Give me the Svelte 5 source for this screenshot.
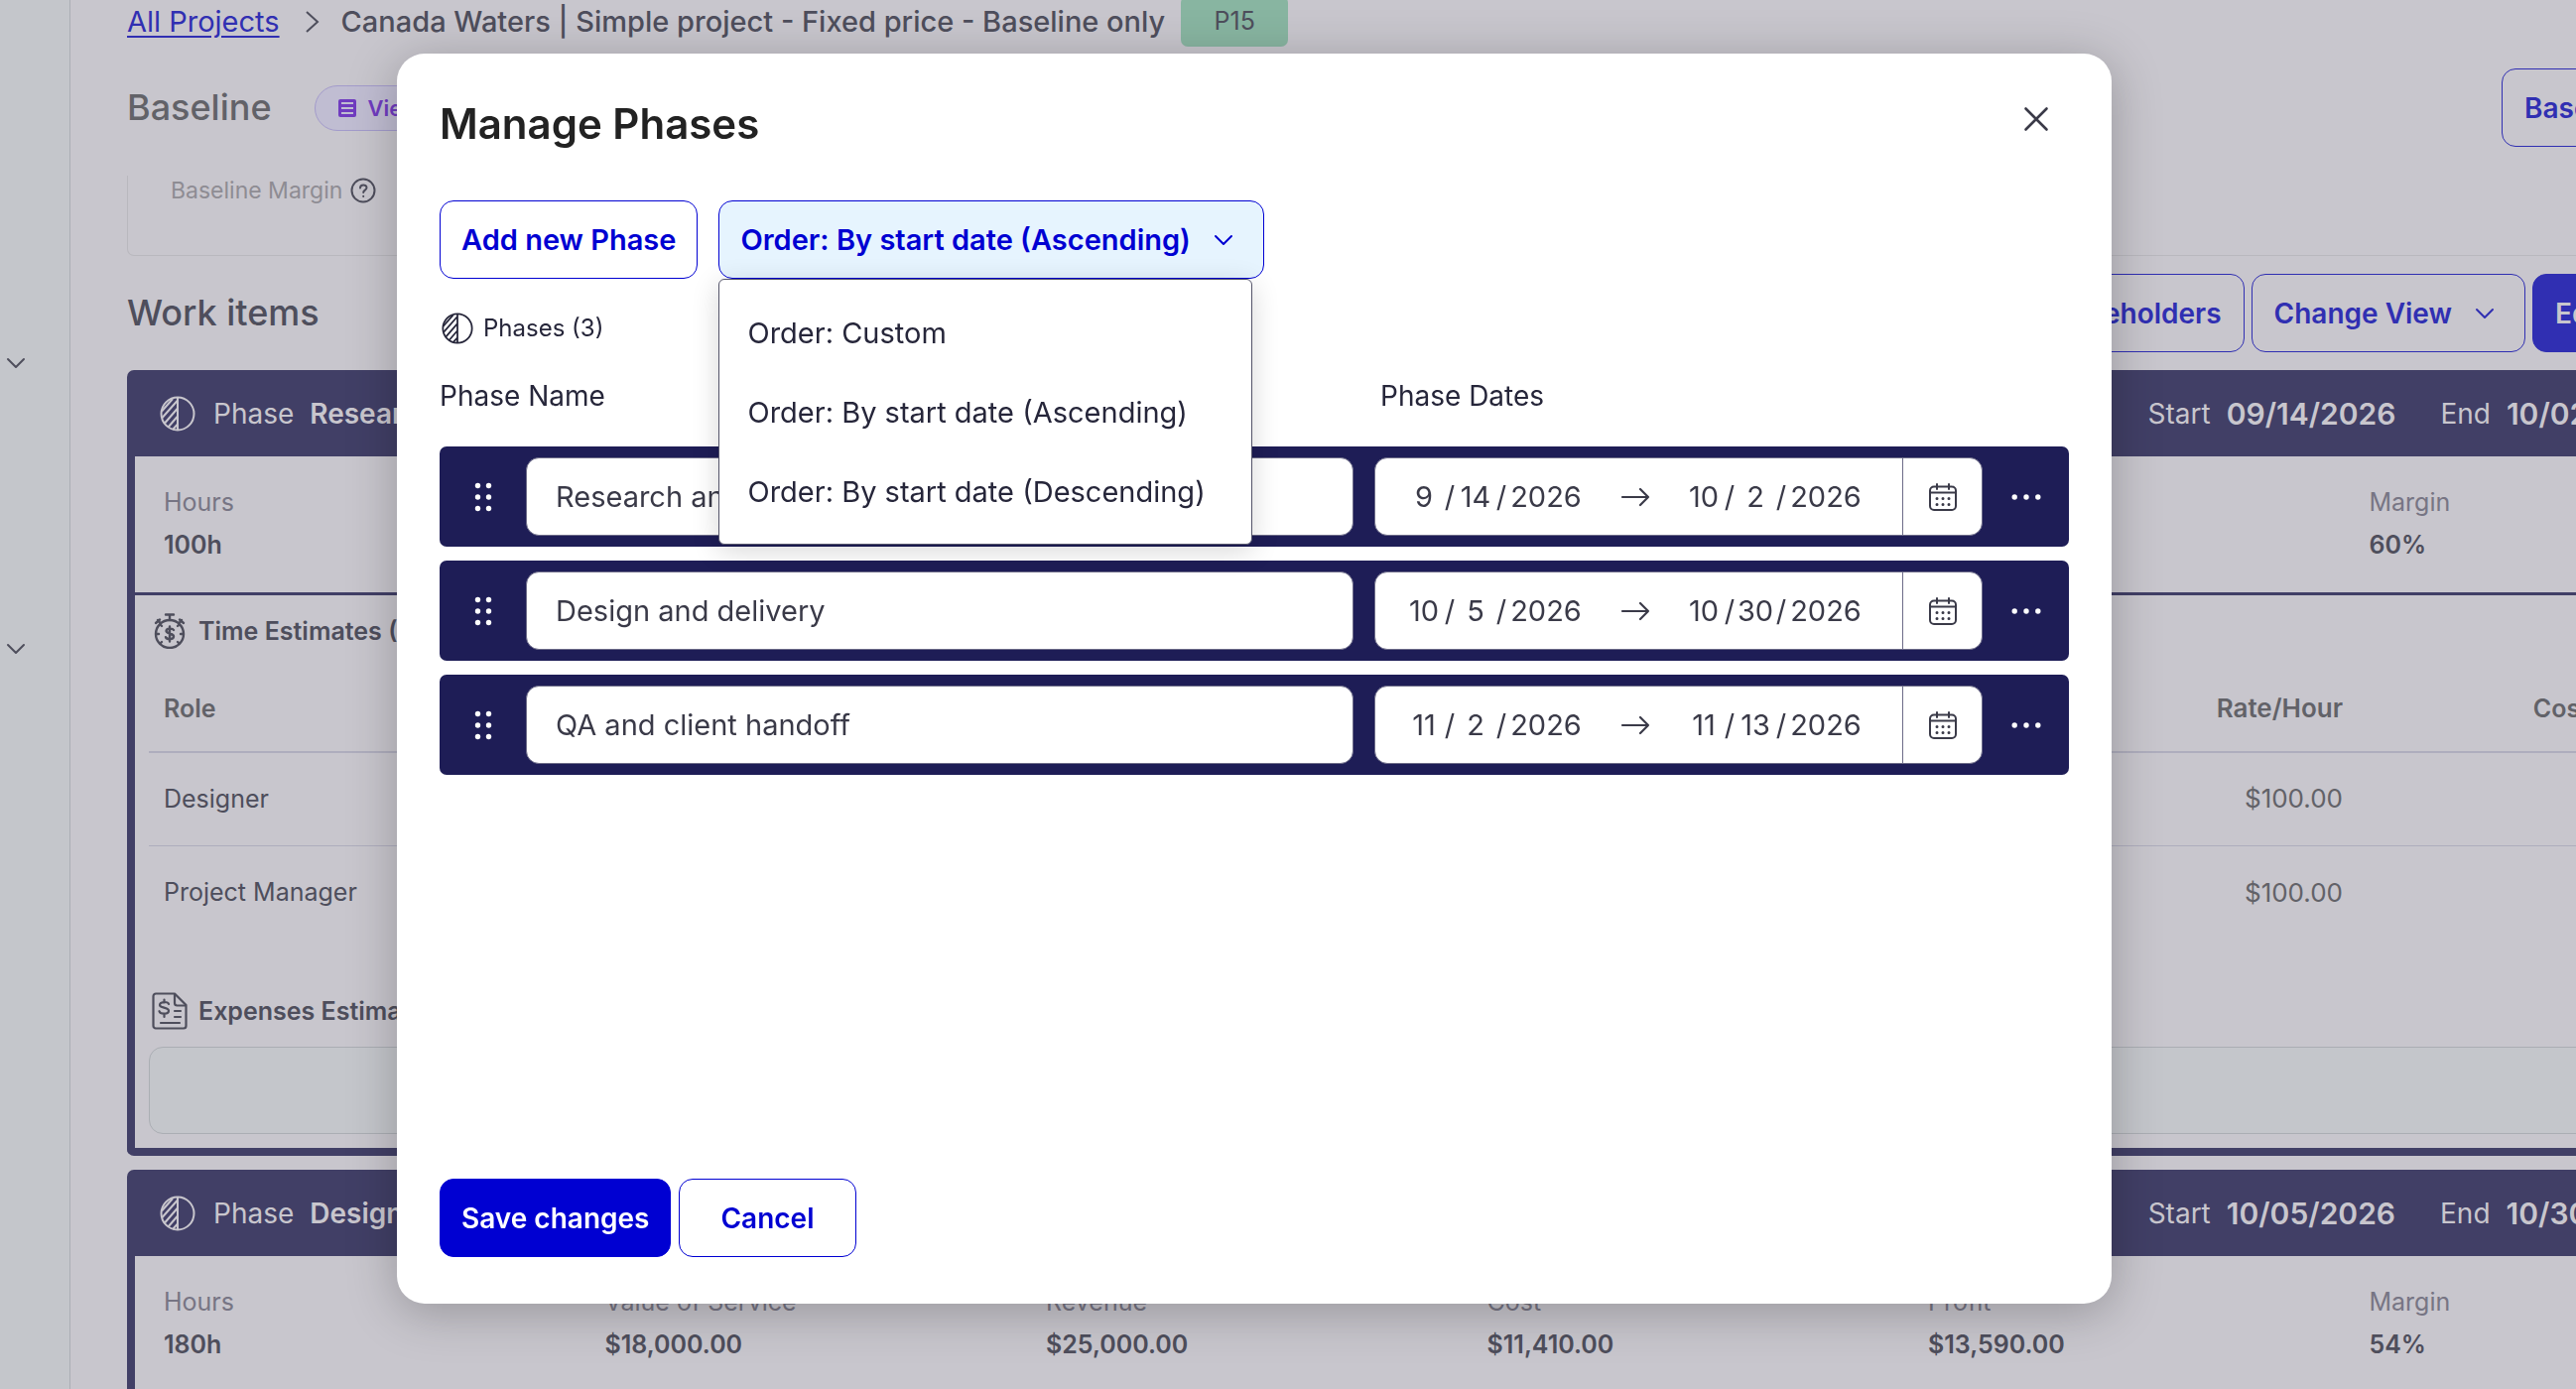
<script lang="ts">
    let menuOpen = $state(true);
    let modalOpen = $state(true);
    let order = $state("By start date (Ascending)");

    const orders = ["Custom", "By start date (Ascending)", "By start date (Descending)"];

    let phases = $state([
        { name: "Research and discovery", start: ["9", "14", "2026"], end: ["10", "2", "2026"] },
        { name: "Design and delivery", start: ["10", "5", "2026"], end: ["10", "30", "2026"] },
        { name: "QA and client handoff", start: ["11", "2", "2026"], end: ["11", "13", "2026"] },
    ]);

    const parts = ["month", "day", "year"];

    const cards = [
        {
            name: "Research and discovery",
            start: "09/14/2026",
            end: "10/02/2026",
            metrics: [
                ["Hours", "100h"],
                ["Value of Service", "$10,000.00"],
                ["Revenue", "$15,000.00"],
                ["Cost", "$6,000.00"],
                ["Profit", "$9,000.00"],
                ["Margin", "60%"],
            ],
            roles: [
                ["Designer", "$100.00"],
                ["Project Manager", "$100.00"],
            ],
        },
        {
            name: "Design and delivery",
            start: "10/05/2026",
            end: "10/30/2026",
            metrics: [
                ["Hours", "180h"],
                ["Value of Service", "$18,000.00"],
                ["Revenue", "$25,000.00"],
                ["Cost", "$11,410.00"],
                ["Profit", "$13,590.00"],
                ["Margin", "54%"],
            ],
            roles: [],
        },
    ];

    function pick(option) {
        order = option;
        menuOpen = false;
    }
</script>

{#snippet phaseIcon(size)}
    <svg width={size} height={size} viewBox="0 0 36 36" fill="none" stroke="currentColor" stroke-width="2" aria-hidden="true">
        <circle cx="18" cy="18" r="16.5" />
        <path d="M18 1.500V34.500M2 15.500L13 3M2.500 22L18 4.500M5 27.500L18 12.500M8.500 31.500L18 20.500M13 34L18 28.500" />
    </svg>
{/snippet}

{#snippet chevron()}
    <svg class="chevron" width="20" height="12" viewBox="0 0 20 12" fill="none" stroke="currentColor" stroke-width="2" stroke-linecap="round" stroke-linejoin="round" aria-hidden="true">
        <path d="M2 2l8 8 8-8" />
    </svg>
{/snippet}

{#snippet dateParts(phase, key)}
    <div class="date">
        {#each parts as part, i}
            {#if i > 0}<span class="slash">/</span>{/if}
            <input class={part} aria-label="{phase.name} {key} {part}" bind:value={phase[key][i]} />
        {/each}
    </div>
{/snippet}

<div class="page">
    <aside>
        <button aria-label="Expand section">{@render chevron()}</button>
        <button aria-label="Expand section">{@render chevron()}</button>
    </aside>

    <main>
        <nav>
            <a href="#projects">All Projects</a>
            <svg width="14" height="24" viewBox="0 0 14 24" fill="none" stroke="currentColor" stroke-width="2" aria-hidden="true">
                <path d="M1 2l11 10L1 22" />
            </svg>
            <span class="project">Canada Waters | Simple project - Fixed price - Baseline only</span>
            <span class="code">P15</span>
        </nav>

        <header>
            <h2 class="muted">Baseline</h2>
            <button class="pill">
                <svg width="18" height="18" viewBox="0 0 18 18" aria-hidden="true">
                    <rect width="18" height="18" rx="2" fill="#703cc0" />
                    <path d="M3 4h12M3 9h12M3 14h12" stroke="#c0bdd2" stroke-width="2" />
                </svg>
                View details
            </button>
            <button class="btn last">Baseline</button>
        </header>

        <section class="margin-box">
            Baseline Margin
            <svg width="26" height="26" viewBox="0 0 26 26" fill="none" stroke="#4e4e5c" stroke-width="2" stroke-linecap="round" aria-hidden="true">
                <circle cx="13" cy="13" r="11.500" />
                <path d="M10 10.500c0-4 6.500-4 6.500-.3 0 2.300-3.300 2.500-3.300 4.800M13.200 18.800v.2" />
            </svg>
        </section>

        <div class="toolbar">
            <h2>Work items</h2>
            <button class="btn">Stakeholders</button>
            <button class="btn with-chevron">Change View {@render chevron()}</button>
            <button class="btn primary last">Edit Baseline</button>
        </div>

        {#each cards as card}
            <article>
                <div class="card-head">
                    {@render phaseIcon(36)}
                    <span>Phase</span>
                    <b>{card.name}</b>
                    <span class="start">Start</span>
                    <time>{card.start}</time>
                    <span class="end">End</span>
                    <time>{card.end}</time>
                </div>
                <dl>
                    {#each card.metrics as [label, value]}
                        <div>
                            <dt>{label}</dt>
                            <dd>{value}</dd>
                        </div>
                    {/each}
                </dl>
                {#if card.roles.length}
                    <div class="estimates">
                        <h3>
                            <svg width="32" height="36" viewBox="0 0 32 36" fill="none" stroke="currentColor" stroke-width="2.400" stroke-linecap="round" aria-hidden="true">
                                <circle cx="16" cy="21" r="14" />
                                <path d="M12 1.500h8M16 2v5M2 10l4-3.500M30 10l-4-3.500M4 7l2.500 3M28 7l-2.500 3M3 21h2M27 21h2M7 30l1-1M25 30l-1-1M7 12l1 1M25 12l-1 1" />
                                <path d="M20 17c-1-2-7.500-2-7.500 1s7.500 2 7.500 5.500-7 3.200-8 .7M16 13.500v15" />
                            </svg>
                            Time Estimates (2)
                        </h3>
                        <table>
                            <thead>
                                <tr><th>Role</th><th class="rate">Rate/Hour</th><th class="cost">Cost</th><th class="actions"></th></tr>
                            </thead>
                            <tbody>
                                {#each card.roles as [role, rate]}
                                    <tr><td>{role}</td><td class="rate">{rate}</td><td></td><td></td></tr>
                                {/each}
                            </tbody>
                        </table>
                        <h3 class="expenses">
                            <svg width="36" height="38" viewBox="0 0 36 38" fill="none" stroke="currentColor" stroke-width="2.200" stroke-linecap="round" stroke-linejoin="round" aria-hidden="true">
                                <path d="M4 1.500h19L34.500 13v21a2.500 2.500 0 0 1-2.500 2.500H4A2.500 2.500 0 0 1 1.500 34V4A2.500 2.500 0 0 1 4 1.500z" />
                                <path d="M23 2v9a2.500 2.500 0 0 0 2.500 2.500H34M23 19h6M23 25h6M9 31h19" />
                                <path d="M17 12c-1-3-9-2.500-9 .9s9 2 9 5.800-8.500 4-9.500.5M12.500 7.500v3M12.500 22v3" />
                            </svg>
                            Expenses Estimates
                        </h3>
                        <div class="empty"></div>
                    </div>
                {/if}
            </article>
        {/each}
    </main>
</div>

{#if modalOpen}
    <div class="overlay">
        <div class="modal" role="dialog" aria-labelledby="modal-title">
            <div class="title">
                <h1 id="modal-title">Manage Phases</h1>
                <button aria-label="Close" onclick={() => (modalOpen = false)}>
                    <svg width="26" height="26" viewBox="0 0 26 26" fill="none" stroke="#3a3a48" stroke-width="2.600" stroke-linecap="round" aria-hidden="true">
                        <path d="M2.500 2.500l21 21M23.500 2.500l-21 21" />
                    </svg>
                </button>
            </div>

            <div class="actions-row">
                <button class="btn">Add new Phase</button>
                <div class="dropdown">
                    <button class="btn with-chevron open" aria-haspopup="menu" aria-expanded={menuOpen} onclick={() => (menuOpen = !menuOpen)}>
                        Order: {order} {@render chevron()}
                    </button>
                    {#if menuOpen}
                        <div class="menu" role="menu">
                            {#each orders as option}
                                <button role="menuitem" onclick={() => pick(option)}>Order: {option}</button>
                            {/each}
                        </div>
                    {/if}
                </div>
            </div>

            <p class="count">{@render phaseIcon(32)} Phases ({phases.length})</p>

            <div class="labels">
                <span>Phase Name</span>
                <span>Phase Dates</span>
            </div>

            {#each phases as phase}
                <div class="phase">
                    <svg class="handle" width="18" height="30" viewBox="0 0 18 30" fill="#fff" aria-hidden="true">
                        <circle cx="3.500" cy="3.500" r="2.700" /><circle cx="14.500" cy="3.500" r="2.700" />
                        <circle cx="3.500" cy="15" r="2.700" /><circle cx="14.500" cy="15" r="2.700" />
                        <circle cx="3.500" cy="26.500" r="2.700" /><circle cx="14.500" cy="26.500" r="2.700" />
                    </svg>
                    <input class="name" aria-label="Phase Name" bind:value={phase.name} />
                    <div class="range">
                        {@render dateParts(phase, "start")}
                        <svg class="arrow" width="30" height="20" viewBox="0 0 30 20" fill="none" stroke="#3a3a48" stroke-width="2.200" stroke-linecap="round" stroke-linejoin="round" aria-hidden="true">
                            <path d="M2 10h26M20 2l8 8-8 8" />
                        </svg>
                        {@render dateParts(phase, "end")}
                        <button class="calendar" aria-label="Open calendar">
                            <svg width="28" height="28" viewBox="0 0 28 28" fill="none" stroke="#3a3a48" stroke-width="2" stroke-linecap="round" aria-hidden="true">
                                <rect x="1" y="3.500" width="26" height="23.500" rx="4" />
                                <path d="M1 9.500h26M8 1v5M20 1v5" />
                                <path d="M8 15.500h.01M14 15.500h.01M20 15.500h.01M8 21.500h.01M14 21.500h.01M20 21.500h.01" stroke-width="3" />
                            </svg>
                        </button>
                    </div>
                    <button class="more" aria-label="More options">
                        <svg width="30" height="6" viewBox="0 0 30 6" fill="#fff" aria-hidden="true">
                            <circle cx="3.200" cy="3" r="2.700" /><circle cx="15" cy="3" r="2.700" /><circle cx="26.800" cy="3" r="2.700" />
                        </svg>
                    </button>
                </div>
            {/each}

            <div class="footer">
                <button class="btn primary">Save changes</button>
                <button class="btn cancel" onclick={() => (modalOpen = false)}>Cancel</button>
            </div>
        </div>
    </div>
{/if}

<style>
    :global(body) {
        font-family: Inter, "Liberation Sans", sans-serif;
        font-size: 28px;
        overflow: hidden;
    }

    * {
        box-sizing: border-box;
    }

    button,
    input {
        font: inherit;
        color: inherit;
        border: none;
        background: none;
        padding: 0;
        margin: 0;
    }

    button {
        cursor: pointer;
    }

    svg {
        display: block;
        flex: none;
    }

    h1, h2, h3, p, dl, dd {
        margin: 0;
    }

    .page {
        --navy: #413f66;
        --blue: #302fb2;
        --tint: transparent;
        --on-primary: #c8c6cd;

        display: flex;
        height: 100vh;
        overflow: hidden;
        background: #c8c6cd;
        color: #4e4e5c;
    }

    aside {
        flex: none;
        width: 71px;
        padding: 356px 6px 0;
        background: #c4c6cb;
        border-right: 1px solid #abaeb4;
    }

    aside button {
        display: block;
        height: 20px;
        margin-bottom: 268px;
    }

    main {
        flex: none;
        width: calc(100% + 173px);
        padding-left: 57px;
    }

    nav {
        display: flex;
        align-items: center;
        height: 51px;
        margin-top: -4px;
        font-size: 29px;
    }

    nav a {
        color: var(--blue);
        text-underline-offset: 4px;
    }

    nav svg {
        margin: 0 22px 0 26px;
    }

    .project {
        font-weight: 500;
    }

    .code {
        width: 108px;
        line-height: 51px;
        margin-left: 16px;
        text-align: center;
        font-size: 25px;
        border-radius: 7px;
        background: #88b5a1;
    }

    header,
    .toolbar {
        display: flex;
        align-items: center;
        gap: 7px;
    }

    header {
        margin-top: 22px;
    }

    h2 {
        padding-bottom: 2px;
        font-size: 36px;
        font-weight: 500;
    }

    h2.muted {
        color: #626268;
    }

    header .btn,
    .toolbar h2 + .btn {
        margin-left: auto;
    }

    header .last {
        width: 319px;
    }

    .toolbar .last {
        width: 288px;
    }

    .last {
        text-align: left;
    }

    .pill {
        display: flex;
        align-items: center;
        gap: 12px;
        height: 46px;
        margin-left: 36px;
        padding: 0 23px;
        font-size: 22px;
        font-weight: 600;
        color: #703cc0;
        background: #c0bdd2;
        border: 1px solid #a39bcb;
        border-radius: 23px;
    }

    .margin-box {
        display: flex;
        gap: 8px;
        height: 81px;
        margin-top: 29px;
        padding-left: 43px;
        font-size: 23px;
        line-height: 30px;
        color: #8e8c93;
        border: 1px solid #b9b8be;
        border-top: none;
        border-radius: 0 0 7px 7px;
    }

    .margin-box svg {
        margin-top: 2px;
    }

    .toolbar {
        margin: 18px 0;
    }

    .btn {
        height: 79px;
        padding: 0 22px;
        font-weight: 600;
        white-space: nowrap;
        color: var(--blue);
        background: var(--tint);
        border: 1px solid var(--blue);
        border-radius: 14px;
    }

    .btn.primary {
        color: var(--on-primary);
        background: var(--blue);
    }

    .btn.with-chevron {
        display: flex;
        align-items: center;
        gap: 23px;
        padding-right: 30px;
    }

    article {
        margin-bottom: 14px;
        border: 8px solid var(--navy);
        border-top: none;
        border-radius: 7px;
    }

    .card-head {
        display: flex;
        align-items: center;
        gap: 16px;
        height: 87px;
        padding: 0 136px 0 25px;
        color: #c8c6cd;
        background: var(--navy);
    }

    .card-head svg {
        margin-right: 2px;
    }

    .card-head b,
    .card-head time {
        font-weight: 600;
    }

    .card-head time {
        font-size: 30px;
    }

    .card-head .start {
        margin-left: auto;
    }

    .card-head .end {
        margin-left: 29px;
    }

    dl {
        display: grid;
        grid-template-columns: repeat(6, 1fr);
        height: 140px;
        padding: 25px 0 0 29px;
        font-size: 25px;
        line-height: 43px;
        border-bottom: 3px solid var(--navy);
    }

    dt {
        color: #777584;
    }

    dd {
        font-weight: 600;
    }

    .estimates {
        padding: 0 14px 14px;
        font-size: 25px;
    }

    h3 {
        display: flex;
        align-items: center;
        gap: 13px;
        height: 72px;
        padding-left: 5px;
        font-size: 25px;
        font-weight: 600;
    }

    h3.expenses {
        gap: 11px;
        margin-top: 36px;
        padding-left: 3px;
    }

    table {
        width: 100%;
        table-layout: fixed;
        border-collapse: separate;
        border-spacing: 0;
    }

    th,
    td {
        height: 94px;
        padding: 0 15px 2px;
        text-align: left;
    }

    th {
        height: 87px;
        font-weight: 600;
        color: #626268;
        border-bottom: 2px solid #aeadbd;
    }

    tr:not(:last-child) td {
        border-bottom: 1px solid #aeadbd;
    }

    .rate,
    .cost {
        width: 248px;
        text-align: right;
    }

    .rate {
        font-size: 26px;
        color: #626268;
    }

    .actions {
        width: 194px;
    }

    .empty {
        height: 88px;
        background: #c4c6cb;
        border: 1px solid #abaeb4;
        border-radius: 14px;
    }

    .overlay {
        --navy: #1e1d56;
        --blue: #0000d2;
        --tint: #fff;
        --on-primary: #fff;

        position: fixed;
        inset: 0;
        padding: 54px 468px 86px 400px;
        color: #26263a;
    }

    .modal {
        display: flex;
        flex-direction: column;
        min-height: 100%;
        padding: 43px 43px 47px;
        background: #fff;
        border-radius: 28px;
        box-shadow: 0 8px 50px rgba(0, 0, 0, 0.25);
    }

    .title {
        display: flex;
        justify-content: space-between;
        height: 105px;
    }

    h1 {
        font-size: 42px;
        line-height: 56px;
        font-weight: 600;
        color: #222;
    }

    .title button {
        height: 26px;
        margin: 10px 20px 0 0;
    }

    .overlay .btn {
        padding-left: 21px;
        padding-right: 21px;
    }

    .overlay .btn.with-chevron {
        padding-right: 30px;
    }

    .actions-row {
        display: flex;
        gap: 21px;
        font-size: 29px;
    }

    .dropdown {
        position: relative;
    }

    .btn.open {
        background: #e6f4fe;
    }

    .menu {
        position: absolute;
        top: 79px;
        left: 0;
        z-index: 1;
        width: 538px;
        padding: 13px 0;
        background: #fff;
        border: 1px solid #55556a;
        border-radius: 6px;
        box-shadow: 0 6px 28px rgba(0, 0, 0, 0.16);
    }

    .menu button {
        display: block;
        width: 100%;
        height: 80px;
        padding-left: 28px;
        text-align: left;
        white-space: nowrap;
    }

    .count {
        display: flex;
        align-items: center;
        gap: 10px;
        height: 99px;
        padding-left: 2px;
        font-size: 24px;
    }

    .labels {
        display: grid;
        grid-template-columns: 1fr 694px;
        height: 70px;
        line-height: 38px;
    }

    .phase {
        display: flex;
        align-items: center;
        height: 101px;
        margin-bottom: 14px;
        background: var(--navy);
        border-radius: 7px;
    }

    .handle {
        margin: 0 34px 0 35px;
    }

    .name,
    .range {
        height: 79px;
        font-size: 29px;
        color: #3a3a48;
        background: #fff;
        border: 1px solid #6d6c88;
        border-radius: 13px;
    }

    .name {
        flex: 1;
        min-width: 0;
        padding: 0 29px;
    }

    .range {
        display: flex;
        align-items: center;
        width: 613px;
        margin-left: 21px;
        padding-left: 30px;
    }

    .date {
        display: flex;
        align-items: center;
    }

    .date input {
        width: 38px;
        text-align: center;
    }

    .date input.year {
        width: 76px;
    }

    .slash {
        width: 14px;
        text-align: center;
    }

    .arrow {
        margin: 0 35px 0 37px;
    }

    .calendar {
        display: grid;
        place-items: center;
        align-self: stretch;
        width: 80px;
        margin-left: auto;
        border-left: 1px solid #6d6c88;
    }

    .more {
        display: grid;
        place-items: center;
        width: 87px;
        height: 79px;
    }

    .footer {
        display: flex;
        gap: 8px;
        margin-top: auto;
    }

    .overlay .btn.cancel {
        padding: 0 41px;
    }
</style>
